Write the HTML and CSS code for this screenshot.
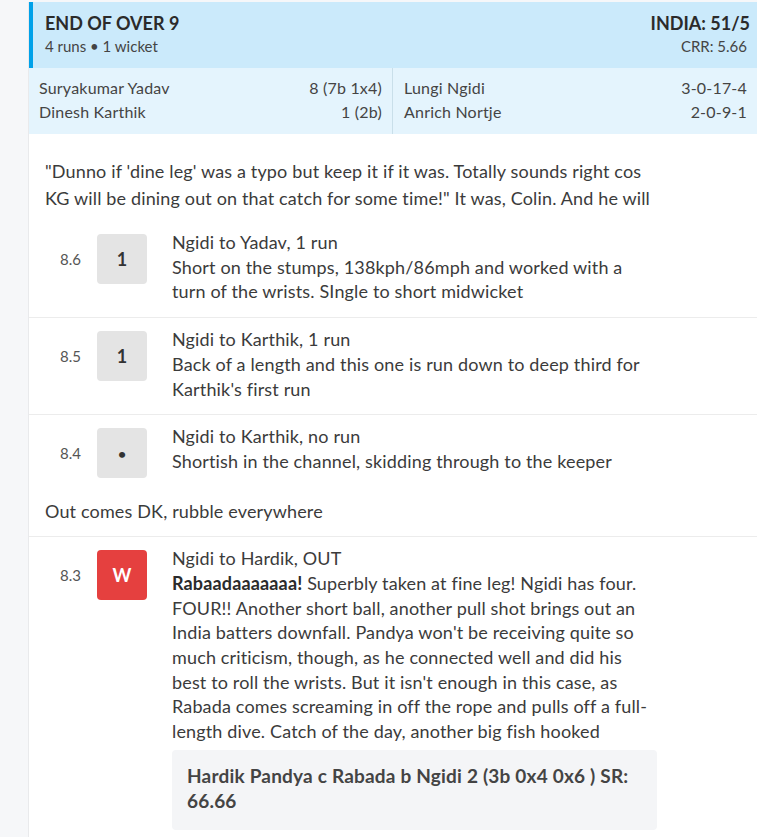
FILE: index.html
```html
<!DOCTYPE html>
<html lang="en">
<head>
    <meta charset="UTF-8">
    <title>Live Commentary - India innings</title>

    <link rel="stylesheet" href="styles.css">
</head>
<body>

<div class="page">
    <div class="gutter"></div>

    <main class="feed">

        <!-- over summary -->
        <div class="over-head">
            <div>
                <div class="over-title">END OF OVER 9</div>
                <div class="over-sub">4 runs &bull; 1 wicket</div>
            </div>
            <div class="over-score">
                <div class="over-title">INDIA: 51/5</div>
                <div class="over-sub">CRR: 5.66</div>
            </div>
        </div>

        <div class="over-stats">
            <div class="stats-col">
                <div class="stat-row"><span>Suryakumar Yadav</span><span>8 (7b 1x4)</span></div>
                <div class="stat-row"><span>Dinesh Karthik</span><span>1 (2b)</span></div>
            </div>
            <div class="stats-col">
                <div class="stat-row"><span>Lungi Ngidi</span><span>3-0-17-4</span></div>
                <div class="stat-row"><span>Anrich Nortje</span><span>2-0-9-1</span></div>
            </div>
        </div>

        <!-- balls -->
        <div class="item first">
            <p class="note">"Dunno if 'dine leg' was a typo but keep it if it was. Totally sounds right cos KG will be dining out on that catch for some time!" It was, Colin. And he will</p>
            <div class="ball">
                <div class="ball-no">8.6</div>
                <div class="ball-run">1</div>
                <div class="ball-text">
                    <div>Ngidi to Yadav, 1 run</div>
                    <div>Short on the stumps, 138kph/86mph and worked with a turn of the wrists. SIngle to short midwicket</div>
                </div>
            </div>
        </div>

        <div class="item">
            <div class="ball">
                <div class="ball-no">8.5</div>
                <div class="ball-run">1</div>
                <div class="ball-text">
                    <div>Ngidi to Karthik, 1 run</div>
                    <div>Back of a length and this one is run down to deep third for Karthik's first run</div>
                </div>
            </div>
        </div>

        <div class="item">
            <div class="ball">
                <div class="ball-no">8.4</div>
                <div class="ball-run dot">&bull;</div>
                <div class="ball-text">
                    <div>Ngidi to Karthik, no run</div>
                    <div>Shortish in the channel, skidding through to the keeper</div>
                </div>
            </div>
            <p class="note after">Out comes DK, rubble everywhere</p>
        </div>

        <div class="item">
            <div class="ball">
                <div class="ball-no">8.3</div>
                <div class="ball-run wicket">W</div>
                <div class="ball-text">
                    <div>Ngidi to Hardik, OUT</div>
                    <div><b>Rabaadaaaaaaa!</b> Superbly taken at fine leg! Ngidi has four. FOUR!! Another short ball, another pull shot brings out an India batters downfall. Pandya won't be receiving quite so much criticism, though, as he connected well and did his best to roll the wrists. But it isn't enough in this case, as Rabada comes screaming in off the rope and pulls off a full-length dive. Catch of the day, another big fish hooked</div>
                    <div class="dismissal">Hardik Pandya c Rabada b Ngidi 2 (3b 0x4 0x6 ) SR: 66.66</div>
                </div>
            </div>
        </div>

    </main>
</div>

</body>
</html>
```

FILE: styles.css
```css
body {
    margin: 0;
    font-family: Lato, "Noto Sans", sans-serif;
    background: #f6f7f9;
    color: #3b3b3b;
}
.page {
    display: flex;
    padding-top: 2px;
    min-height: 835px;
}
.gutter {
    width: 28px;
    flex-shrink: 0;
}
.feed {
    flex: 1;
    background: white;
    border-left: 1px solid #e9eaec;
    overflow: hidden;
}

/* Over summary */
.over-head {
    display: flex;
    justify-content: space-between;
    background: #cbeafb;
    border-left: 4px solid #00a1e9;
    padding: 10px 7px 10px 12px;
    height: 46px;
}
.over-title {
    font-size: 18px;
    font-weight: bold;
    color: #2b2b2b;
    line-height: 22px;
}
.over-sub {
    font-size: 15px;
    line-height: 24px;
    color: #444;
}
.over-score {
    text-align: right;
}
.over-score .over-sub {
    padding-right: 3px;
}
.over-stats {
    display: flex;
    background: #e4f4fd;
    font-size: 16px;
    letter-spacing: 0.2px;
    color: #444;
}
.stats-col {
    flex: 1;
    padding: 8px 10px 10px 10px;
}
.stats-col + .stats-col {
    border-left: 1px solid #c9dfea;
    padding-left: 11px;
}
.stat-row {
    display: flex;
    justify-content: space-between;
    line-height: 24px;
}

/* Commentary items */
.item {
    border-top: 1px solid #ececec;
}
.item.first {
    border-top: none;
}
.note {
    margin: 0;
    padding: 0 96px 0 16px;
    font-size: 18px;
    letter-spacing: 0.15px;
    line-height: 27px;
}
.item.first .note {
    margin-top: 24px;
    margin-bottom: 9px;
}
.note.after {
    margin-top: 7px;
    margin-bottom: 11px;
}
.ball {
    display: flex;
    align-items: flex-start;
    padding: 9px 0 13px 16px;
}
.ball-no {
    width: 36px;
    height: 50px;
    margin-top: 4px;
    display: flex;
    align-items: center;
    justify-content: flex-end;
    font-size: 15px;
    color: #555;
}
.ball-run {
    width: 50px;
    height: 50px;
    margin: 4px 25px 0 16px;
    flex-shrink: 0;
    border-radius: 4px;
    background: #e4e4e4;
    display: flex;
    align-items: center;
    justify-content: center;
    font-size: 18px;
    font-weight: bold;
    color: #333;
}
.ball-run.dot {
    font-size: 14px;
}
.ball-run.wicket {
    background: #e5403f;
    color: white;
}
.ball-text {
    width: 485px;
    font-size: 18px;
    letter-spacing: 0.15px;
    line-height: 24.7px;
}
.ball-text b {
    color: #2b2b2b;
}
.dismissal {
    margin-top: 6px;
    padding: 13px 15px 17px 15px;
    background: #f4f5f7;
    border-radius: 4px;
    font-size: 19px;
    letter-spacing: 0.2px;
    font-weight: bold;
    line-height: 25px;
    color: #444;
}
```
